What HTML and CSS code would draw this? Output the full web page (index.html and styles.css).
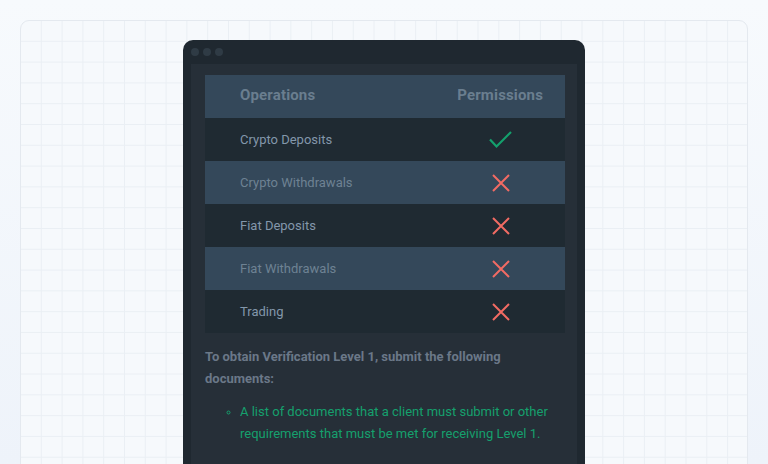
FILE: index.html
```html
<!DOCTYPE html>
<html>
<head>
<meta charset="utf-8">
<link rel="stylesheet" href="styles.css">
</head>
<body>
<div class="stage">
  <div class="card">
    <div class="window">
      <div class="titlebar">
        <span class="dot"></span><span class="dot"></span><span class="dot"></span>
      </div>
      <div class="content">
        <div class="table">
          <div class="row head">
            <div class="op">Operations</div>
            <div class="perm">Permissions</div>
          </div>
          <div class="row dark">
            <div class="op">Crypto Deposits</div>
            <div class="perm"><svg width="24" height="20" viewBox="0 0 24 20"><path d="M1 9.5 L7.5 16.5 L22 2" fill="none" stroke="#14a06d" stroke-width="2.2"/></svg></div>
          </div>
          <div class="row light">
            <div class="op">Crypto Withdrawals</div>
            <div class="perm"><svg width="20" height="20" viewBox="0 0 20 20"><path d="M2 2 L18 18 M18 2 L2 18" fill="none" stroke="#f26b63" stroke-width="2"/></svg></div>
          </div>
          <div class="row dark">
            <div class="op">Fiat Deposits</div>
            <div class="perm"><svg width="20" height="20" viewBox="0 0 20 20"><path d="M2 2 L18 18 M18 2 L2 18" fill="none" stroke="#f26b63" stroke-width="2"/></svg></div>
          </div>
          <div class="row light">
            <div class="op">Fiat Withdrawals</div>
            <div class="perm"><svg width="20" height="20" viewBox="0 0 20 20"><path d="M2 2 L18 18 M18 2 L2 18" fill="none" stroke="#f26b63" stroke-width="2"/></svg></div>
          </div>
          <div class="row dark">
            <div class="op">Trading</div>
            <div class="perm"><svg width="20" height="20" viewBox="0 0 20 20"><path d="M2 2 L18 18 M18 2 L2 18" fill="none" stroke="#f26b63" stroke-width="2"/></svg></div>
          </div>
        </div>
        <p class="note">To obtain Verification Level 1, submit the following documents:</p>
        <ul class="reqs">
          <li>A list of documents that a client must submit or other requirements that must be met for receiving Level 1.</li>
        </ul>
      </div>
    </div>
  </div>
</div>
</body>
</html>
```
FILE: styles.css
```css
* { box-sizing: border-box; }
html, body { margin: 0; height: 100%; overflow: hidden; }
body {
  background: linear-gradient(180deg, #f7fafd 0%, #eef3fa 100%);
  font-family: Roboto, "Noto Sans", sans-serif;
}
.stage { padding: 20px 20px 0 20px; }
.card {
  height: 520px;
  border: 1px solid #e4e9ef;
  border-radius: 9px;
  background-color: #f6f9fc;
  background-image:
    linear-gradient(to right, #eaeff4 1px, transparent 1px),
    linear-gradient(to bottom, #eaeff4 1px, transparent 1px);
  background-size: 20.8px 20.8px;
  background-position: -1px -1px;
  padding-top: 19px;
  display: flex;
  justify-content: center;
}
.window {
  width: 402px;
  background: #1f2830;
  border-radius: 10px 10px 0 0;
  padding: 0 8px;
  align-self: flex-start;
  height: 600px;
}
.titlebar {
  height: 24px;
  display: flex;
  align-items: center;
  gap: 4px;
}
.dot {
  width: 8px; height: 8px; border-radius: 50%;
  background: #2f3b45;
}
.content {
  background: #262f38;
  padding: 11px 12px 20px 14px;
  height: 560px;
}
.table { width: 360px; }
.row {
  display: grid;
  grid-template-columns: 1fr 120px;
  height: 43px;
  align-items: center;
}
.row .op { padding-left: 35px; font-size: 13px; padding-bottom: 1px; }
.row .perm { display: flex; justify-content: center; padding-right: 8px; }
.head { background: #34485a; }
.head .op, .head .perm { font-size: 15px; font-weight: 700; color: #6a7e8f; letter-spacing: 0.15px; padding-bottom: 3px; }
.head .perm { justify-content: flex-end; padding-right: 22px; }
.dark { background: #1f2a32; }
.dark .op { color: #8397ab; }
.light { background: #34485a; }
.light .op { color: #6e8293; }
.note {
  margin: 13px 0 0 0;
  font-size: 13px;
  font-weight: 700;
  line-height: 22px;
  color: #6b7888;
  width: 320px;
}
.reqs {
  margin: 11px 0 0 0;
  padding-left: 35px;
  list-style: circle;
  color: #15a06d;
  font-size: 13px;
  line-height: 22px;
}
.reqs li::marker { font-size: 10px; }
```
